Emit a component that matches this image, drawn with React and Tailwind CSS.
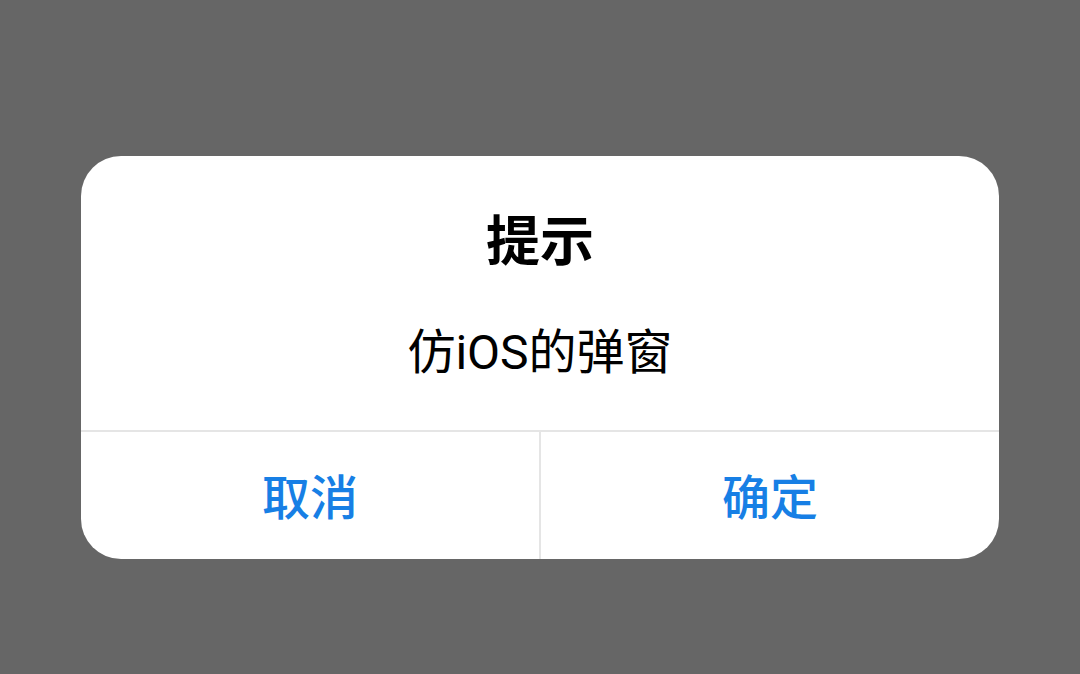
export default function App() {
  return (
    <div
      className="w-[1080px] h-[674px] bg-[#666666] flex justify-center pt-[156px]"
      style={{ fontFamily: 'Roboto, "Noto Sans CJK SC", "Noto Sans", sans-serif' }}
    >
      <div className="w-[918px] h-[403px] rounded-[40px] bg-white overflow-hidden flex flex-col">
        <div className="h-[274px] flex flex-col items-center pt-[57px]">
          <div className="text-[54px] leading-[60px] font-bold text-black">提示</div>
          <div className="mt-[52px] text-[48px] leading-[56px] text-black">仿iOS的弹窗</div>
        </div>
        <div className="flex-1 flex border-t-2 border-[#e5e5e5]">
          <div className="flex-1 flex items-center justify-center pt-[6px] border-r-2 border-[#e5e5e5] text-[48px] font-medium text-[#177fe5]">
            取消
          </div>
          <div className="flex-1 flex items-center justify-center pt-[6px] text-[48px] font-medium text-[#177fe5]">
            确定
          </div>
        </div>
      </div>
    </div>
  );
}
